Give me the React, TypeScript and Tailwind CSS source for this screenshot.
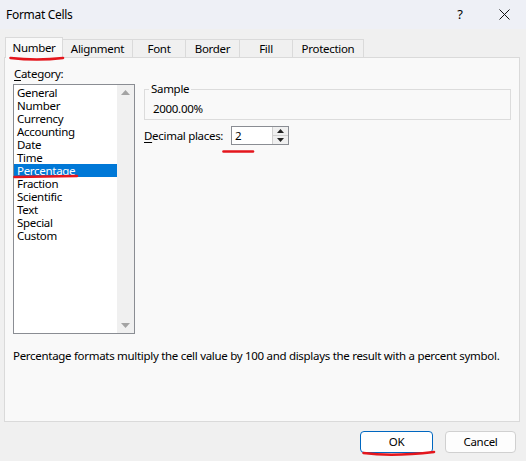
import React from "react";

const tabs = ["Number", "Alignment", "Font", "Border", "Fill", "Protection"];
const tabWidths = ["w-[58px]", "w-[70px]", "w-[53px]", "w-[54px]", "w-[53px]", "w-[71px]"];
const categories = [
  "General",
  "Number",
  "Currency",
  "Accounting",
  "Date",
  "Time",
  "Percentage",
  "Fraction",
  "Scientific",
  "Text",
  "Special",
  "Custom",
];

const Mark = ({ className, d, w, h }: { className: string; d: string; w: number; h: number }) => (
  <svg className={`absolute pointer-events-none ${className}`} width={w} height={h} viewBox={`0 0 ${w} ${h}`}>
    <path d={d} stroke="#e4161d" strokeWidth="2.6" fill="none" strokeLinecap="round" />
  </svg>
);

const App = () => {
  return (
    <div
      className="relative w-[526px] h-[461px] bg-[#f0f0f0] text-[11.5px] tracking-[-0.3px] text-black overflow-hidden"
      style={{ fontFamily: '"Segoe UI", "Noto Sans", sans-serif' }}
    >
      {/* title bar */}
      <div className="h-[29px] bg-[#eef0f6] flex items-center pl-[6px]">
        <span className="flex-1 text-[12px]">Format Cells</span>
        <span className="w-[12px] text-center text-[13px] mr-[33px]">?</span>
        <svg className="mr-[16px]" width="11" height="11" viewBox="0 0 11 11">
          <path d="M0.5 0.5 L10.5 10.5 M10.5 0.5 L0.5 10.5" stroke="#111" strokeWidth="1" />
        </svg>
      </div>

      {/* tabs */}
      <div className="flex items-end pl-[5px] pt-[8px] relative z-10">
        {tabs.map((t, i) => (
          <div
            key={t}
            className={
              i === 0
                ? `${tabWidths[i]} h-[21px] -mb-px bg-[#f9f9f9] border border-b-0 border-[#dadada] flex items-center justify-center pb-[1px]`
                : `${tabWidths[i]} h-[18px] bg-[#f0f0f0] border border-l-0 border-b-0 border-[#dadada] flex items-center justify-center`
            }
          >
            {t}
          </div>
        ))}
      </div>

      {/* panel */}
      <div className="ml-[4px] w-[516px] h-[365px] border border-[#dadada] bg-[#f9f9f9] pl-[8px] pt-[8px] flex flex-col">
        <div className="flex">
          <div className="flex flex-col">
            <div className="pl-[1px] leading-[15px] mb-[3px]">
              <span className="underline underline-offset-2">C</span>ategory:
            </div>
            <div className="w-[122px] h-[250px] border border-[#8a8d93] bg-white flex">
              <div className="flex-1 pt-[1px] flex flex-col">
                {categories.map((c) => (
                  <div
                    key={c}
                    className={
                      c === "Percentage"
                        ? "h-[13px] leading-[13px] pl-[3px] bg-[#0078d7] text-white"
                        : "h-[13px] leading-[13px] pl-[3px]"
                    }
                  >
                    {c}
                  </div>
                ))}
              </div>
              <div className="w-[17px] bg-[#f0f0f0] flex flex-col justify-between items-center py-[5px]">
                <svg width="9" height="5" viewBox="0 0 9 5">
                  <path d="M0 5 L4.5 0 L9 5 Z" fill="#a3a3a3" />
                </svg>
                <svg width="9" height="5" viewBox="0 0 9 5">
                  <path d="M0 0 L4.5 5 L9 0 Z" fill="#a3a3a3" />
                </svg>
              </div>
            </div>
          </div>

          <div className="ml-[9px] pt-[17px] flex flex-col">
            <div className="relative w-[367px] h-[31px] border border-[#dcdcdc] mt-[6px]">
              <span className="absolute -top-[9px] left-[4px] px-[2px] bg-[#f9f9f9] leading-[15px]">Sample</span>
              <div className="pl-[8px] pt-[11px] leading-[15px]">2000.00%</div>
            </div>
            <div className="flex items-center mt-[6px]">
              <span className="w-[87px] whitespace-nowrap">
                <span className="underline underline-offset-2">D</span>ecimal places:
              </span>
              <div className="w-[58px] h-[19px] border border-[#8a8d93] bg-white flex">
                <div className="flex-1 pl-[3px] leading-[17px]">2</div>
                <div className="w-[16px] flex flex-col border-l border-[#d0d0d0] bg-[#f0f0f0]">
                  <div className="flex-1 flex items-center justify-center border-b border-[#d0d0d0]">
                    <svg width="7" height="4" viewBox="0 0 7 4">
                      <path d="M0 4 L3.5 0 L7 4 Z" fill="#222" />
                    </svg>
                  </div>
                  <div className="flex-1 flex items-center justify-center">
                    <svg width="7" height="4" viewBox="0 0 7 4">
                      <path d="M0 0 L3.5 4 L7 0 Z" fill="#222" />
                    </svg>
                  </div>
                </div>
              </div>
            </div>
          </div>
        </div>

        <p className="mt-[14px] leading-[15px] whitespace-nowrap">
          Percentage formats multiply the cell value by 100 and displays the result with a percent symbol.
        </p>
      </div>

      {/* buttons */}
      <div className="flex justify-end gap-[12px] pr-[10px] mt-[9px]">
        <button className="w-[73px] h-[22px] rounded-[4px] border-[1.5px] border-[#0067c0] bg-white">OK</button>
        <button className="w-[71px] h-[22px] rounded-[4px] border border-[#d0d0d0] bg-[#fdfdfd]">Cancel</button>
      </div>

      {/* red annotations */}
      <Mark className="left-[9px] top-[56px] z-20" w={56} h={6} d="M1.5 2 Q28 5 54 2" />
      <Mark className="left-[13px] top-[174px]" w={66} h={5} d="M1.5 3 L64 2" />
      <Mark className="left-[222px] top-[149px]" w={33} h={5} d="M1.5 2.5 L31 2.5" />
      <Mark className="left-[362px] top-[450px]" w={75} h={8} d="M1.5 3 Q30 7 72 2" />
    </div>
  );
};

export default App;
